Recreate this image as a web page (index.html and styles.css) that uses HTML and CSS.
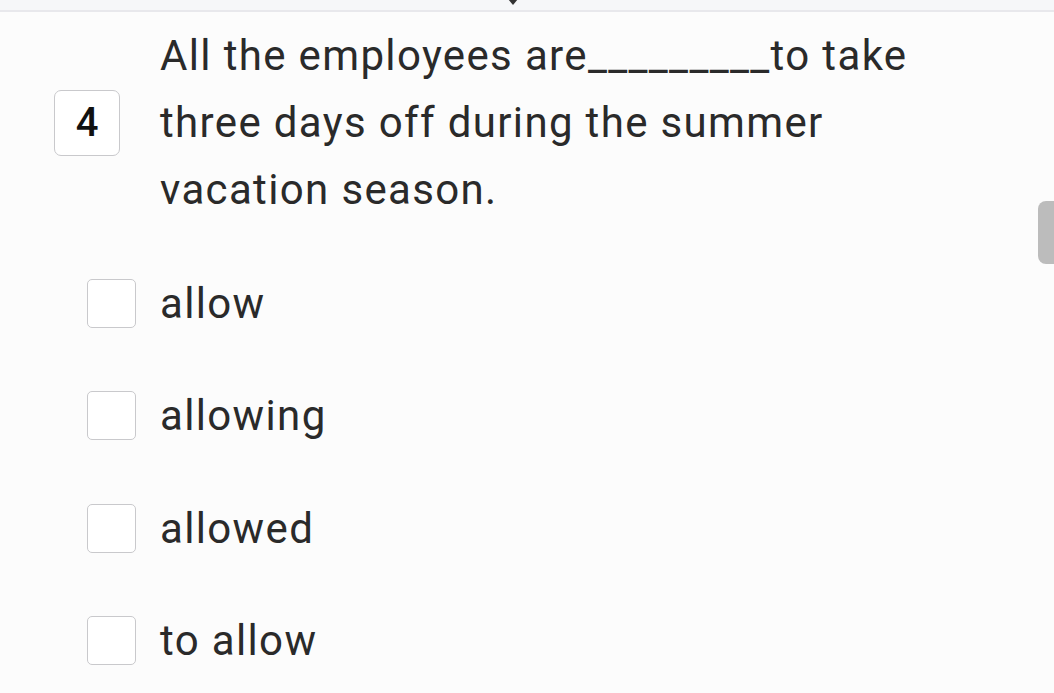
FILE: index.html
```html
<!DOCTYPE html>
<html>
<head>
<meta charset="utf-8">
<link rel="stylesheet" href="styles.css">
</head>
<body>
<div class="topbar">
  <svg class="caret" width="12" height="7" viewBox="0 0 12 7"><path d="M1 0 L11 0 L6 6 Z" fill="#333"/></svg>
</div>
<main class="content">
  <section class="question">
    <div class="num">4</div>
    <p class="qtext">All the employees are_________to take three days off during the summer vacation season.</p>
  </section>
  <ul class="options">
    <li class="option"><span class="check"></span><span class="label">allow</span></li>
    <li class="option"><span class="check"></span><span class="label">allowing</span></li>
    <li class="option"><span class="check"></span><span class="label">allowed</span></li>
    <li class="option"><span class="check"></span><span class="label">to allow</span></li>
  </ul>
</main>
<div class="scrollthumb"></div>
</body>
</html>
```
FILE: styles.css
```css
html, body {
  margin: 0;
  padding: 0;
}
body {
  background: #fcfcfc;
  font-family: Roboto, "Noto Sans", sans-serif;
  color: #2a2a2a;
  width: 1054px;
  height: 693px;
  overflow: hidden;
  position: relative;
}
.topbar {
  height: 10px;
  background: #f6f7f9;
  border-bottom: 2px solid #e8e8ec;
  position: relative;
}
.caret {
  position: absolute;
  left: 507px;
  top: -1px;
}
.content {
  padding-top: 10px;
}
.question {
  display: flex;
  align-items: center;
}
.num {
  box-sizing: border-box;
  width: 66px;
  height: 66px;
  margin-left: 54px;
  border: 1.5px solid #c9c9cc;
  border-radius: 7px;
  background: #fff;
  display: flex;
  align-items: center;
  justify-content: center;
  font-size: 40px;
  font-weight: 500;
  color: #111;
}
.qtext {
  margin: 0 0 0 40px;
  width: 790px;
  font-size: 42px;
  letter-spacing: 1.35px;
  line-height: 67px;
}
.options {
  list-style: none;
  margin: 24px 0 0 0;
  padding: 0;
}
.option {
  height: 112.5px;
  display: flex;
  align-items: center;
}
.check {
  box-sizing: border-box;
  width: 49px;
  height: 49px;
  margin-left: 87px;
  border: 1.5px solid #c9c9cc;
  border-radius: 5px;
  background: #fff;
}
.label {
  margin-left: 24px;
  font-size: 42px;
  letter-spacing: 1.35px;
}
.scrollthumb {
  position: absolute;
  left: 1038px;
  top: 201px;
  width: 16px;
  height: 63px;
  border-radius: 8px 0 0 8px;
  background: #bcbcbc;
}
```
